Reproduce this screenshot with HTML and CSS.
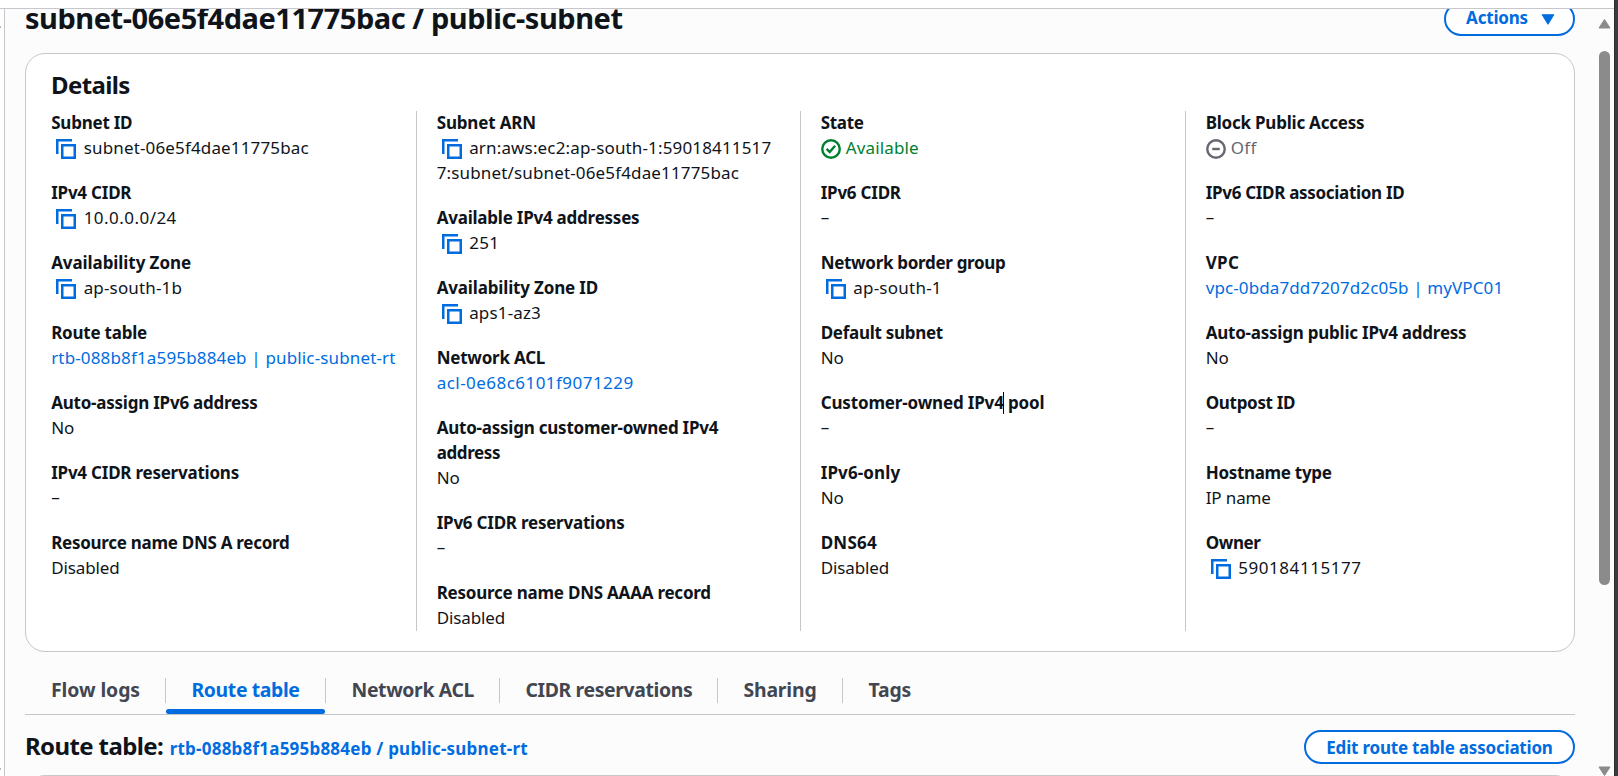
FILE: index.html
```
<!DOCTYPE html>
<html lang="en">
<head>
<meta charset="utf-8">
<title>Subnet details</title>
<link rel="stylesheet" href="styles.css">
</head>
<body>
<svg class="defs" aria-hidden="true">
  <symbol id="copy" viewBox="0 0 20 20"><path d="M1.25 15V1.25H16M6.25 6.25h12.5v12.5H6.25z" fill="none" stroke="currentColor" stroke-width="2.5"/></symbol>
  <symbol id="ok" viewBox="0 0 20 20"><g fill="none" stroke="currentColor" stroke-width="2.4"><circle cx="10" cy="10" r="8.75"/><path d="M5.6 9.9l3.1 3.1 5.4-6.2"/></g></symbol>
  <symbol id="off" viewBox="0 0 20 20"><g fill="none" stroke="currentColor" stroke-width="2.4"><circle cx="10" cy="10" r="8.75"/><path d="M6.2 10h7.6"/></g></symbol>
</svg>
<div class="window">
  <div class="topbar"></div>
  <div class="body">
    <aside class="rail"><i class="tick"></i><i class="tick"></i></aside>
    <main class="content">
      <header class="page-head">
        <h1>subnet-06e5f4dae11775bac / public-subnet</h1>
        <button class="btn btn-actions">Actions<svg class="caret" viewBox="0 0 14 11"><path d="M1.3.8h11.4L7 10z" fill="currentColor" stroke="currentColor" stroke-width="1.2" stroke-linejoin="round"/></svg></button>
      </header>
      <section class="card">
        <h2>Details</h2>
        <div class="cols">
          <dl class="col">
            <dt>Subnet ID</dt><dd><svg class="copy"><use href="#copy"/></svg>subnet-06e5f4dae11775bac</dd>
            <dt>IPv4 CIDR</dt><dd class="w4"><svg class="copy"><use href="#copy"/></svg>10.0.0.0/24</dd>
            <dt class="w2">Availability Zone</dt><dd><svg class="copy"><use href="#copy"/></svg>ap-south-1b</dd>
            <dt>Route table</dt><dd><a>rtb-088b8f1a595b884eb | public-subnet-rt</a></dd>
            <dt>Auto-assign IPv6 address</dt><dd class="n1">No</dd>
            <dt>IPv4 CIDR reservations</dt><dd class="dash">–</dd>
            <dt class="n1">Resource name DNS A record</dt><dd class="n1">Disabled</dd>
          </dl>
          <dl class="col">
            <dt class="w1">Subnet ARN</dt><dd><svg class="copy"><use href="#copy"/></svg>arn:aws:ec2:ap-south-1:59018411517<br>7:subnet/subnet-06e5f4dae11775bac</dd>
            <dt>Available IPv4 addresses</dt><dd class="w3"><svg class="copy"><use href="#copy"/></svg>251</dd>
            <dt class="w1">Availability Zone ID</dt><dd><svg class="copy"><use href="#copy"/></svg>aps1-az3</dd>
            <dt>Network ACL</dt><dd><a class="w4">acl-0e68c6101f9071229</a></dd>
            <dt>Auto-assign customer-owned IPv4<br><span class="n3">address</span></dt><dd class="n1">No</dd>
            <dt>IPv6 CIDR reservations</dt><dd class="dash">–</dd>
            <dt>Resource name DNS AAAA record</dt><dd class="n1">Disabled</dd>
          </dl>
          <dl class="col">
            <dt class="n2">State</dt><dd class="ok"><svg class="status"><use href="#ok"/></svg>Available</dd>
            <dt>IPv6 CIDR</dt><dd class="dash">–</dd>
            <dt class="n2">Network border group</dt><dd class="w2"><svg class="copy"><use href="#copy"/></svg>ap-south-1</dd>
            <dt class="n1">Default subnet</dt><dd class="n1">No</dd>
            <dt class="w1">Customer-owned IPv4<span class="cursor"></span> pool</dt><dd class="dash">–</dd>
            <dt class="w3">IPv6-only</dt><dd class="n1">No</dd>
            <dt class="w4">DNS64</dt><dd class="n1">Disabled</dd>
          </dl>
          <dl class="col">
            <dt>Block Public Access</dt><dd class="off w3"><svg class="status"><use href="#off"/></svg>Off</dd>
            <dt class="n2">IPv6 CIDR association ID</dt><dd class="dash">–</dd>
            <dt class="w5">VPC</dt><dd><a class="w1">vpc-0bda7dd7207d2c05b | myVPC01</a></dd>
            <dt>Auto-assign public IPv4 address</dt><dd class="n1">No</dd>
            <dt class="n2">Outpost ID</dt><dd class="dash">–</dd>
            <dt class="n2">Hostname type</dt><dd class="n1">IP name</dd>
            <dt class="n3">Owner</dt><dd class="w5"><svg class="copy"><use href="#copy"/></svg>590184115177</dd>
          </dl>
        </div>
      </section>
      <nav class="tabs">
        <a class="tab loose">Flow logs</a>
        <a class="tab active">Route table</a>
        <a class="tab">Network ACL</a>
        <a class="tab">CIDR reservations</a>
        <a class="tab loose">Sharing</a>
        <a class="tab loose">Tags</a>
      </nav>
      <div class="route-head">
        <h2>Route table: <a>rtb-088b8f1a595b884eb / public-subnet-rt</a></h2>
        <button class="btn btn-edit">Edit route table association</button>
      </div>
      <section class="card next"></section>
    </main>
    <div class="scrollbar">
      <svg class="arrow" viewBox="0 0 13 11"><path d="M6.5 1.5L12 10H1z"/></svg>
      <div class="thumb"></div>
      <svg class="arrow down" viewBox="0 0 13 11"><path d="M6.5 9.5L12 1H1z"/></svg>
    </div>
  </div>
  <div class="edge"></div>
</div>
</body>
</html>
```

FILE: styles.css
```
* { box-sizing: border-box; }
body {
  margin: 0;
  font: 400 17px/25px "Noto Sans", "Open Sans", sans-serif;
  color: #0f141a;
  background: #fff;
}
h1, h2, dl, dt, dd { margin: 0; }
a { color: #006ce0; }
.defs { position: absolute; width: 0; height: 0; }

.window {
  display: grid;
  grid-template: 9px 767px / 1614px 4px;
  width: 1618px;
  height: 776px;
  overflow: hidden;
}
.topbar { border-bottom: 1px solid #c6c6cd; background: #fff; }
.edge { grid-column: 2; grid-row: 1 / 3; background: #3a3b3d; border-left: 1px solid #2c2d2f; }
.body {
  display: grid;
  grid-template-columns: 5px 1fr 19px;
  background: #fcfcfd;
  overflow: hidden;
}
.rail {
  border-right: 1px solid #c6c6cd;
  background: #fff;
  display: flex;
  flex-direction: column;
  justify-content: space-between;
  padding: 17px 0 7px;
}
.tick { width: 1px; height: 2px; background: #b4b4bb; }
.content { padding: 0 20px; overflow: hidden; }

.page-head {
  display: flex;
  justify-content: space-between;
  align-items: flex-start;
  height: 44px;
}
h1 { margin-top: -10px; font-size: 29px; line-height: 38px; font-weight: 700; letter-spacing: -.46px; }

.btn {
  font: 700 17px/25px "Noto Sans", "Open Sans", sans-serif;
  letter-spacing: -.2px;
  color: #006ce0;
  background: #fff;
  border: 2px solid #006ce0;
  border-radius: 20px;
  height: 34px;
  padding: 0;
  display: flex;
  align-items: center;
  justify-content: center;
}
.btn-actions { width: 131px; margin-top: -7px; padding: 0 0 3px 2px; }
.caret { width: 14px; height: 11px; margin: 4px 0 0 13px; }
.btn-edit { width: 271px; }

.card {
  border: 1px solid #c6c6cd;
  border-radius: 20px;
  background: #fff;
}
.card:not(.next) { height: 599px; padding: 15px 25px 0; }
h2 { font-size: 24px; line-height: 31px; font-weight: 700; letter-spacing: -.62px; }
.cols {
  display: grid;
  grid-template: 520px / 365px 384px 385px 1fr;
  margin-top: 11px;
}
.col { white-space: nowrap; padding-left: .2px; }
.col + .col { border-left: 1px solid #c6c6cd; padding-left: 19.7px; }
dt { font-weight: 700; letter-spacing: -.23px; }
dt:first-child { margin-top: -1px; }
dd { margin-bottom: 20px; letter-spacing: .15px; }
dd:last-child { margin-bottom: 0; }
.dash { line-height: 23px; padding-bottom: 2px; letter-spacing: 0; }
.copy { width: 20px; height: 20px; margin: 0 7.5px 0 5px; vertical-align: -5px; color: #006ce0; }
.status { width: 20px; height: 20px; margin-right: 5px; vertical-align: -5px; }
.ok { color: #00802f; }
.off { color: #656871; }
.cursor { position: absolute; width: 1px; height: 22px; margin: 2px 0 0 -1px; background: #000; }

/* letter tracking steps: bold labels, then values */
dt.n3, dt .n3 { letter-spacing: -.4px; }
dt.n2 { letter-spacing: -.31px; }
dt.n1 { letter-spacing: -.28px; }
dt.w1 { letter-spacing: -.16px; }
dt.w2 { letter-spacing: -.08px; }
dt.w3 { letter-spacing: .12px; }
dt.w4 { letter-spacing: .22px; }
dt.w5 { letter-spacing: .33px; }
dd.n1 { letter-spacing: -.12px; }
dd .w1 { letter-spacing: .11px; }
dd.w2 { letter-spacing: .24px; }
dd.w3 { letter-spacing: .3px; }
dd.w4, dd .w4 { letter-spacing: .46px; }
dd.w5 { letter-spacing: .56px; }

.tabs {
  display: grid;
  grid-template-columns: 141px 160px 174px 218px 125px 100px;
  height: 63px;
  padding-top: 26px;
  border-bottom: 1px solid #c6c6cd;
}
.tab {
  position: relative;
  height: 25px;
  padding-left: 25.5px;
  border-right: 1px solid #c6c6cd;
  color: #424650;
  font-size: 19.4px;
  line-height: 23px;
  font-weight: 700;
  letter-spacing: -.37px;
  white-space: nowrap;
}
.tab.loose { letter-spacing: -.18px; }
.tab:first-child { padding-left: 26px; letter-spacing: -.08px; }
.tab:last-child { border-right: 0; }
.tab.active { color: #006ce0; }
.tab.active::after {
  content: "";
  position: absolute;
  left: 0;
  right: 0;
  bottom: -11px;
  height: 5px;
  border-radius: 5px;
  background: #006ce0;
}

.route-head {
  display: flex;
  justify-content: space-between;
  padding-top: 15px;
  height: 60px;
}
.route-head a { margin-left: 1px; font-size: 17px; letter-spacing: .22px; }
.next { height: 60px; }

.scrollbar {
  display: flex;
  flex-direction: column;
  align-items: center;
  margin-left: 0;
  padding: 9px 0 0;
}
.arrow { flex: none; width: 13px; height: 11px; fill: #8b8b8b; stroke: #8b8b8b; stroke-linejoin: round; }
.thumb { flex: none; width: 11px; height: 534px; margin-top: 22px; border-radius: 6px; background: #8b8b8b; }
.down { margin-top: 181px; }
```
